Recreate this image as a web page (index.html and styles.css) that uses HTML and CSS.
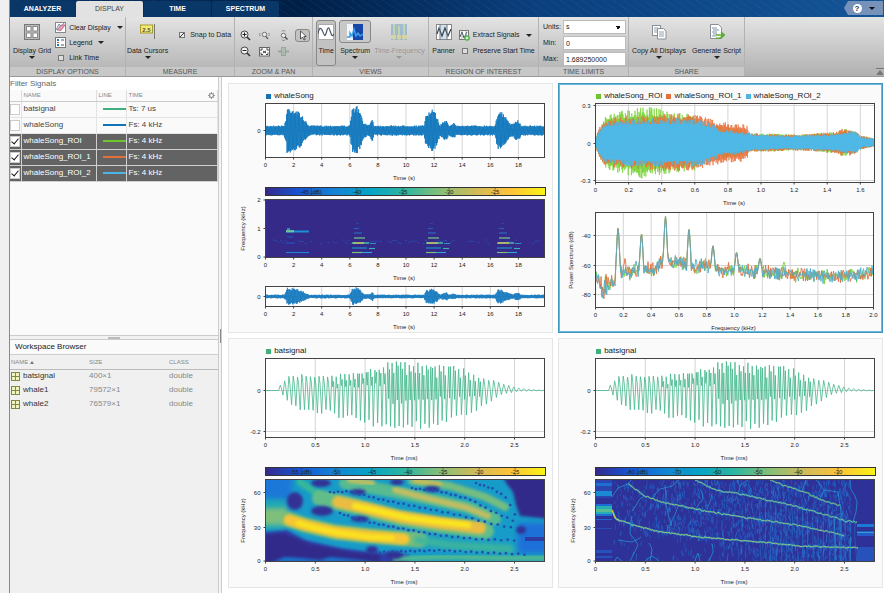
FILE: index.html
```html
<!DOCTYPE html>
<html lang="en">
<head>
<meta charset="utf-8">
<title>Signal Analyzer</title>
<link rel="stylesheet" href="styles.css">
</head>
<body>
<div class="app">
  <header class="titlebar">
    <nav class="tabs">
      <button class="tab">ANALYZER</button>
      <button class="tab tab-active">DISPLAY</button>
      <button class="tab">TIME</button>
      <button class="tab">SPECTRUM</button>
    </nav>
    <button class="help" aria-label="Help"><span class="help-mark">?</span><span class="caret"></span></button>
  </header>

  <div class="toolstrip">
    <section class="group g-display">
      <div class="tools">
        <button class="big">
          <svg class="icon" viewBox="0 0 16 16"><rect x=".5" y=".5" width="15" height="15" fill="#bbb" stroke="#777"/><g fill="#fff" stroke="#888"><rect x="2.5" y="2.5" width="4.5" height="4.5"/><rect x="9" y="2.5" width="4.5" height="4.5"/><rect x="2.5" y="9" width="4.5" height="4.5"/><rect x="9" y="9" width="4.5" height="4.5"/></g></svg>
          <span>Display Grid</span><i class="caret"></i>
        </button>
        <div class="rows">
          <button class="small"><svg class="icon-s" viewBox="0 0 11 11"><rect x=".5" y=".5" width="10" height="10" fill="#fff" stroke="#888"/><path d="M1 8 4 2 6 5 9 1" fill="none" stroke="#6a8fb5"/><path d="M2 8 6 3h4L6 8.500z" fill="#e6a1b5" stroke="#a84c6b" stroke-width=".7"/></svg>Clear Display<i class="caret"></i></button>
          <button class="small"><svg class="icon-s" viewBox="0 0 11 11"><rect x=".5" y=".5" width="10" height="10" fill="#fff" stroke="#777"/><path d="M2 3h2M2 8h2" stroke="#1d7ac0" stroke-width="2"/><path d="M2 5.5h2" stroke="#c44" stroke-width="1"/><path d="M6 3h3M6 8h3" stroke="#555"/></svg>Legend<i class="caret"></i></button>
          <label class="small check"><input type="checkbox">Link Time</label>
        </div>
      </div>
      <h2>DISPLAY OPTIONS</h2>
    </section>

    <section class="group g-measure">
      <div class="tools">
        <button class="big">
          <svg class="icon" viewBox="0 0 16 16"><path d="M14.5 0v15" stroke="#777"/><rect x=".5" y="1" width="12" height="8" fill="#f3ea72" stroke="#a59b32"/><text x="6.5" y="7.5" text-anchor="middle" class="flag">2.5</text></svg>
          <span>Data Cursors</span><i class="caret"></i>
        </button>
        <div class="rows rows-mid"><label class="small check"><input type="checkbox" checked>Snap to Data</label></div>
      </div>
      <h2>MEASURE</h2>
    </section>

    <section class="group g-zoom">
      <div class="tools zoom-grid">
        <button aria-label="Zoom in"><svg class="icon-s" viewBox="0 0 11 11"><circle cx="4.5" cy="4.5" r="3.5" fill="#f4f4f4" stroke="#444"/><path d="M7 7l3 3" stroke="#333" stroke-width="1.6"/><path d="M2.5 4.5h4M4.5 2.5v4" stroke="#222"/></svg></button>
        <button aria-label="Zoom X"><svg class="icon-s" viewBox="0 0 11 11"><circle cx="5.5" cy="4.5" r="2.2" fill="#eee" stroke="#555" stroke-width=".8"/><path d="M7 6.500l2 2.500" stroke="#444" stroke-width="1.200"/><path d="M1.500 3 0 4.500 1.500 6M9.500 3 11 4.500 9.500 6" fill="none" stroke="#666" stroke-width=".8"/></svg></button>
        <button aria-label="Zoom Y"><svg class="icon-s" viewBox="0 0 11 11"><circle cx="5.5" cy="5.5" r="2.2" fill="#eee" stroke="#555" stroke-width=".8"/><path d="M7 7l2.500 2.500" stroke="#444" stroke-width="1.200"/><path d="M4 1.500 5.500 0 7 1.500M4 9.500 5.500 11 7 9.500" fill="none" stroke="#666" stroke-width=".8"/></svg></button>
        <button aria-label="Pointer" class="pressed"><svg class="icon-s" viewBox="0 0 11 11"><path d="M3.5 1v8l2-2 1.5 3 1.2-.6L6.8 6.5h2.5z" fill="#fff" stroke="#333" stroke-width=".8"/></svg></button>
        <button aria-label="Zoom out"><svg class="icon-s" viewBox="0 0 11 11"><circle cx="4.5" cy="4.5" r="3.5" fill="#f4f4f4" stroke="#444"/><path d="M7 7l3 3" stroke="#333" stroke-width="1.6"/><path d="M2.5 4.5h4" stroke="#222"/></svg></button>
        <button aria-label="Fit to view"><svg class="icon-s" viewBox="0 0 11 11"><rect x=".5" y="1.5" width="10" height="8.5" fill="#fff" stroke="#666"/><path d="M2 5V3h2M7 3h2v2M9 6.5v2H7M4 8.5H2v-2M4 5l3 2M7 5 4 7" fill="none" stroke="#444"/></svg></button>
        <button aria-label="Restore" disabled><svg class="icon-s faded" viewBox="0 0 11 11"><rect x="3.5" y="1.5" width="4" height="8" fill="#9bb5a4" stroke="#888"/><path d="M0 5.5h3M8 5.5h3" stroke="#888" stroke-width="2"/></svg></button>
      </div>
      <h2>ZOOM &amp; PAN</h2>
    </section>

    <section class="group g-views">
      <div class="tools">
        <button class="big pressed">
          <svg class="icon" viewBox="0 0 16 16"><rect x=".5" y=".5" width="15" height="15" fill="#fff" stroke="#aaa"/><path d="M0 10C1 3 3 3 4.5 7S7 14 8.5 8 11 3 12.5 8s2 4 3.5 2" fill="none" stroke="#456" stroke-width="1.2"/></svg>
          <span>Time</span>
        </button>
        <button class="big">
          <span class="iconbox"><svg class="icon" viewBox="0 0 16 16"><rect width="16" height="16" fill="#f2f6fc"/><rect x="6" width="10" height="16" fill="#1546a8"/><path d="M0 13h3V9l2 3 2-7 2 7 2-3 2 3 3-2" fill="none" stroke="#3a9de8" stroke-width="1.5"/></svg></span>
          <span>Spectrum</span><i class="caret"></i>
        </button>
        <button class="big" disabled>
          <svg class="icon faded" viewBox="0 0 16 16"><rect width="16" height="16" fill="#7ba9cd"/><path d="M3 0v16M8 2v14M13 0v16" stroke="#aed0a0" stroke-width="2"/><path d="M0 13h16" stroke="#d8d28a" stroke-width="4"/><path d="M5.5 0v16M10.5 0v16" stroke="#8aa"/></svg>
          <span>Time-Frequency</span><i class="caret"></i>
        </button>
      </div>
      <h2>VIEWS</h2>
    </section>

    <section class="group g-roi">
      <div class="tools">
        <button class="big">
          <svg class="icon" viewBox="0 0 16 16"><rect x=".5" y=".5" width="15" height="15" fill="#fff" stroke="#888"/><rect x="4" y="1" width="7" height="14" fill="#cfe0ee"/><path d="M1 10 3 4l3 8 3-8 3 8 3-7" fill="none" stroke="#345" stroke-width="1.2"/><path d="M4 0v16M11 0v16" stroke="#777"/></svg>
          <span>Panner</span>
        </button>
        <div class="rows rows-mid">
          <button class="small"><svg class="icon-s" viewBox="0 0 11 11"><rect x=".5" y=".5" width="9" height="9" fill="#fff" stroke="#777"/><path d="M1 7 3 2l2 6 3-6" fill="none" stroke="#456"/><path d="M3 0v10M7 0v6" stroke="#888" stroke-width=".7"/><circle cx="8" cy="8" r="2.8" fill="#49a942"/><path d="M6.5 8h3M8 6.5v3" stroke="#fff"/></svg>Extract Signals<i class="caret"></i></button>
          <label class="small check"><input type="checkbox">Preserve Start Time</label>
        </div>
      </div>
      <h2>REGION OF INTEREST</h2>
    </section>

    <section class="group g-limits">
      <div class="tools fields">
        <label for="units">Units:</label><select id="units"><option>s</option></select>
        <label for="min">Min:</label><input id="min" type="text" value="0">
        <label for="max">Max:</label><input id="max" type="text" value="1.689250000">
      </div>
      <h2>TIME LIMITS</h2>
    </section>

    <section class="group g-share">
      <div class="tools">
        <button class="big">
          <svg class="icon" viewBox="0 0 16 16"><g fill="#fff" stroke="#8a8f96"><rect x="1.5" y="1.5" width="8" height="10"/><path d="M6.5 4.5h6l2.5 2.5v8H6.5z"/></g><path d="M3 4h4M3 6h3M3 8h3M8 8h5M8 10h5M8 12h5" stroke="#8fa0b0"/></svg>
          <span>Copy All Displays</span><i class="caret"></i>
        </button>
        <button class="big">
          <svg class="icon" viewBox="0 0 16 16"><path d="M1.5.5h8l3 3v11h-11z" fill="#fff" stroke="#8a8f96"/><path d="M3 4h5M4 6h6M3 8h5M4 10h4M3 12h4" stroke="#7c93a8"/><path d="M7 14c4 1 6-1 6-3M7 11h8M12 8l3.5 3-3.5 3" fill="none" stroke="#5dab35" stroke-width="1.5"/></svg>
          <span>Generate Script</span><i class="caret"></i>
        </button>
      </div>
      <h2>SHARE</h2>
    </section>
    <button class="collapse" aria-label="Minimize toolstrip"><svg viewBox="0 0 8 8"><path d="M0 1h8M4 3l3 4H1z" fill="#777" stroke="#777"/></svg></button>
  </div>

  <div class="work">
    <aside class="side">
      <div class="signals">
        <input class="filter" type="text" placeholder="Filter Signals" aria-label="Filter Signals">
        <table class="sigtable">
          <colgroup><col class="c-check"><col class="c-name"><col class="c-line"><col></colgroup>
          <thead><tr><th></th><th>NAME</th><th>LINE</th><th><span class="th-time">TIME <svg class="gear" viewBox="0 0 8 8"><circle cx="4" cy="4" r="2.2" fill="none" stroke="#888" stroke-width="1.2"/><path d="M4 0v1.5M4 6.5V8M0 4h1.5M6.5 4H8M1.2 1.2l1 1M5.8 5.8l1 1M6.8 1.2l-1 1M2.2 5.8l-1 1" stroke="#888"/></svg></span></th></tr></thead>
          <tbody>
            <tr><td><input type="checkbox" aria-label="batsignal"></td><td>batsignal</td><td><span class="swatch s-bat"></span></td><td>Ts: 7 us</td></tr>
            <tr><td><input type="checkbox" aria-label="whaleSong"></td><td>whaleSong</td><td><span class="swatch s-whale"></span></td><td>Fs: 4 kHz</td></tr>
            <tr class="sel"><td><input type="checkbox" checked aria-label="whaleSong_ROI"></td><td>whaleSong_ROI</td><td><span class="swatch s-roi"></span></td><td>Fs: 4 kHz</td></tr>
            <tr class="sel"><td><input type="checkbox" checked aria-label="whaleSong_ROI_1"></td><td>whaleSong_ROI_1</td><td><span class="swatch s-roi1"></span></td><td>Fs: 4 kHz</td></tr>
            <tr class="sel"><td><input type="checkbox" checked aria-label="whaleSong_ROI_2"></td><td>whaleSong_ROI_2</td><td><span class="swatch s-roi2"></span></td><td>Fs: 4 kHz</td></tr>
          </tbody>
        </table>
      </div>
      <div class="splitter"><span></span></div>
      <div class="workspace">
        <h3>Workspace Browser</h3>
        <table class="wstable">
          <colgroup><col class="w-name"><col class="w-size"><col></colgroup>
          <thead><tr><th>NAME <i class="sort"></i></th><th>SIZE</th><th>CLASS</th></tr></thead>
          <tbody>
            <tr><td><span class="var"><i class="matrix"></i>batsignal</span></td><td>400×1</td><td>double</td></tr>
            <tr><td><span class="var"><i class="matrix"></i>whale1</span></td><td>79572×1</td><td>double</td></tr>
            <tr><td><span class="var"><i class="matrix"></i>whale2</span></td><td>76579×1</td><td>double</td></tr>
          </tbody>
        </table>
      </div>
    </aside>
    <div class="vsplit"><span></span></div>
    <main class="displays">
      <section class="display">
        <div class="legend"><span><i class="s-whale"></i>whaleSong</span></div>
        <svg id="whale-time" viewBox="229 101 323 84"></svg>
        <svg id="whale-spec" viewBox="229 185 323 99"></svg>
        <svg id="whale-pan" viewBox="229 284 323 48"></svg>
      </section>
      <section class="display display-active">
        <div class="legend"><span><i class="s-roi"></i>whaleSong_ROI</span><span><i class="s-roi1"></i>whaleSong_ROI_1</span><span><i class="s-roi2"></i>whaleSong_ROI_2</span></div>
        <svg id="roi-time" viewBox="559 101 323 107"></svg>
        <svg id="roi-power" viewBox="559 208 323 124"></svg>
      </section>
      <section class="display">
        <div class="legend"><span><i class="s-bat"></i>batsignal</span></div>
        <svg id="bat-time" viewBox="229 356 323 108"></svg>
        <svg id="bat-spec" viewBox="229 464 323 123"></svg>
      </section>
      <section class="display">
        <div class="legend"><span><i class="s-bat"></i>batsignal</span></div>
        <svg id="bat-time-2" viewBox="229 356 323 108"></svg>
        <svg id="bat-reassigned" viewBox="229 464 323 123"></svg>
      </section>
    </main>
  </div>
</div>
<script src="charts.js"></script>
</body>
</html>
```

FILE: styles.css
```css
* { box-sizing: border-box; }
body {
  margin: 0;
  background: #f0f0f0;
  color: #222;
  font: 7px/10px "Liberation Sans", Arial, sans-serif;
}
button, input, select { font: inherit; color: inherit; }
button { margin: 0; padding: 0; border: 0; background: none; }
h2, h3 { margin: 0; font-weight: normal; }
input[type="checkbox"] {
  appearance: none;
  flex: none;
  width: 6px;
  height: 6px;
  margin: 0;
  border: 1px solid #777;
  background: #ddd;
}
.check input:checked { background: linear-gradient(135deg, #eee 40%, #333 40%, #333 60%, #eee 60%); }

.app {
  display: flex;
  flex-direction: column;
  min-height: 100vh;
  margin-left: 9px;
  border-left: 1px solid #8a8a8a;
}

/* Title bar */
.titlebar {
  display: flex;
  justify-content: space-between;
  align-items: flex-end;
  height: 17px;
  background:
    repeating-linear-gradient(35deg, transparent 0 5px, rgba(90, 160, 220, .07) 5px 6px),
    linear-gradient(90deg, #0a3566 0, #001f47 33%, #0b3f7d 60%, #135496 100%);
}
.tabs { display: flex; gap: 1px; }
.tab {
  width: 67px;
  height: 16px;
  border-radius: 2px 2px 0 0;
  background: #093767;
  color: #fff;
  font-weight: bold;
}
.tab:first-child { width: 65px; }
.tab-active { background: #e2e2e2; color: #444; font-weight: normal; }
.help {
  display: flex;
  align-items: center;
  justify-content: center;
  gap: 7px;
  width: 39px;
  height: 14px;
  margin: 0 1px 2px 0;
  background: #7792b8;
  clip-path: polygon(4px 0, 100% 0, 100% 100%, 4px 100%, 0 50%);
}
.help .caret { border-top-color: #111; }
.help-mark {
  width: 9px;
  height: 9px;
  border-radius: 50%;
  background: #fff;
  color: #235;
  font-size: 8px;
  font-weight: bold;
  line-height: 9px;
}

/* Toolstrip */
.toolstrip {
  display: flex;
  height: 60px;
  background: linear-gradient(#e4e4e4, #cfcfcf 40%, #b0b0b0);
  border-bottom: 1px solid #999;
}
.group {
  display: flex;
  flex-direction: column;
  flex: none;
  border-right: 1px solid #b2b2b2;
}
.group h2 {
  height: 9px;
  background: #c8c8c8;
  color: #555;
  font-size: 7px;
  line-height: 9px;
  text-align: center;
}
.g-display { width: 116px; }
.g-measure { width: 109px; }
.g-zoom { width: 78px; }
.g-views { width: 116px; }
.g-roi { width: 110px; }
.g-limits { width: 90px; }
.g-share { width: 116px; }
.tools {
  display: flex;
  flex: 1;
  justify-content: center;
  gap: 6px;
  padding: 3px 2px 1px;
  white-space: nowrap;
}
.g-display .tools { gap: 4px; justify-content: flex-start; padding-left: 3px; }
.g-measure .tools { gap: 8px; padding-right: 4px; }
.g-views .tools { gap: 3px; }
.g-roi .tools { gap: 4px; }
.big {
  display: flex;
  flex-direction: column;
  align-items: center;
  padding-top: 4px;
}
.big > span:not(.iconbox) { margin-top: 6px; }
.big:disabled { color: #999; }
.big:disabled .caret { border-top-color: #999; }
.icon { display: block; width: 16px; height: 16px; }
.icon-s { display: block; flex: none; width: 11px; height: 11px; }
.faded { opacity: .6; }
.flag { font: bold 6px "Liberation Sans", sans-serif; fill: #554; }
.iconbox {
  margin: -4px 0 -3px;
  padding: 3px 7px 2px;
  border: 1px solid #888;
  border-radius: 3px;
  background: #c9c9c9;
}
.pressed { border: 1px solid #888; border-radius: 3px; background: #c2c2c2; }
.big.pressed { padding: 3px 1px 0; }
.caret {
  display: inline-block;
  width: 0;
  height: 0;
  border: 3px solid transparent;
  border-top: 3px solid #222;
  border-bottom: 0;
}
.rows { display: grid; grid-auto-rows: 15px; }
.rows-mid { grid-auto-rows: 16px; align-content: center; }
.g-measure .rows-mid { padding-bottom: 16px; }
.small { display: flex; align-items: center; gap: 3px; }
.small .caret { margin-left: 3px; }
.check input { margin: 0 2px 0 3px; }
.zoom-grid {
  display: grid;
  grid-template-columns: repeat(4, 16px);
  grid-auto-rows: 14px;
  gap: 2px 3px;
  align-content: center;
  place-items: center;
}
.zoom-grid .pressed { padding: 0 1px; }
.fields {
  display: grid;
  grid-template-columns: 18px 1fr;
  gap: 2px;
  align-items: center;
  padding: 3px 2px 1px 4px;
}
.fields input, .fields select {
  appearance: none;
  width: 100%;
  height: 14px;
  padding: 0 2px;
  border: 1px solid #bbb;
  border-radius: 0;
  background: #fff;
}
.fields select {
  background:
    linear-gradient(to bottom left, transparent 50%, #111 50%) right 4px center / 3px 3px no-repeat,
    linear-gradient(to bottom right, transparent 50%, #111 50%) right 7px center / 3px 3px no-repeat, #fff;
  background:
    linear-gradient(135deg, #111 50%, transparent 50%) right 4px center / 3px 3px no-repeat,
    linear-gradient(225deg, #111 50%, transparent 50%) right 7px center / 3px 3px no-repeat, #fff;
}
.collapse { align-self: flex-end; margin-left: auto; }
.collapse svg { display: block; width: 8px; height: 9px; }

/* Work area */
.work { display: flex; flex: 1; background: #fff; }
.side { display: flex; flex-direction: column; flex: none; width: 208px; }
.signals { height: 258px; background: #fafafa; }
.filter {
  display: block;
  width: 100%;
  height: 13px;
  padding: 0;
  border: 0;
  background: #fff;
  font-size: 8px;
}
.filter::placeholder { color: #666; opacity: 1; }
table { width: 100%; border-collapse: collapse; table-layout: fixed; }
th { padding: 0 2px; color: #888; font-size: 6px; font-weight: normal; text-align: left; }
td { padding: 0 2px; font-size: 8px; }
.c-check { width: 11px; }
.c-name { width: 75px; }
.c-line { width: 30px; }
.sigtable th { height: 11px; border-right: 1px solid #ddd; border-bottom: 1px solid #ccc; }
.sigtable td { height: 16px; border: 1px solid #e4e4e4; border-left: 0; color: #444; }
.sigtable td:first-child { padding: 0; }
.sigtable td:nth-child(3) { padding: 0 0 0 6px; }
.sigtable input { display: block; width: 10px; height: 11px; border: 1px solid #ccc; background: #fff; }
.sigtable input:checked::after {
  content: "";
  display: block;
  width: 3px;
  height: 6px;
  margin: 0 auto;
  border: solid #111;
  border-width: 0 1px 1px 0;
  transform: rotate(40deg);
}
.sigtable .sel td { background: #636363; border-color: #d0d0d0; color: #fff; }
.th-time { display: flex; justify-content: space-between; align-items: center; }
.gear { width: 7px; height: 7px; }
.swatch { display: block; height: 2px; }
.s-bat { background: #3fae7f; }
.s-whale { background: #1273b8; }
.s-roi { background: #6fc52c; }
.s-roi1 { background: #e2703a; }
.s-roi2 { background: #4db5e6; }
.splitter {
  display: flex;
  justify-content: center;
  align-items: center;
  height: 5px;
  border: solid #ccc;
  border-width: 1px 0;
  background: #f2f2f2;
}
.splitter span { width: 12px; height: 2px; background: #bbb; }
.workspace { flex: 1; background: #f0f0f0; }
.workspace h3 {
  height: 15px;
  padding-left: 5px;
  border-bottom: 1px solid #ccc;
  background: #fafafa;
  color: #222;
  font-size: 8px;
  line-height: 14px;
}
.w-name { width: 77px; }
.w-size { width: 80px; }
.wstable th { height: 14px; border-bottom: 1px solid #bbb; }
.wstable td { height: 14px; color: #888; }
.wstable th:first-child, .wstable td:first-child { padding-left: 1px; }
.var { display: flex; align-items: center; gap: 3px; color: #333; }
.matrix {
  width: 9px;
  height: 9px;
  border: 1px solid #7b8b45;
  background: linear-gradient(#7b8b45, #7b8b45) center / 1px 100% no-repeat,
    linear-gradient(#7b8b45, #7b8b45) center / 100% 1px no-repeat, #f1f2c0;
}
.sort {
  display: inline-block;
  border: 2px solid transparent;
  border-top: 0;
  border-bottom: 3px solid #777;
}
.vsplit {
  display: flex;
  flex: none;
  width: 4px;
  border: solid #ccc;
  border-width: 0 1px;
  background: #f4f4f4;
}
.vsplit span { width: 1px; height: 14px; margin: 252px 0 0 1px; background: #888; }

/* Displays */
.displays {
  display: grid;
  flex: 1;
  grid-template-columns: 1fr 1fr;
  align-content: start;
  gap: 5px;
  min-width: 0;
  padding: 6px 1px 5px 6px;
  background: #fff;
}
.display { border: 1px solid #e6e6e6; background: #fafafa; }
.display-active { border-color: #3d97bf; box-shadow: inset 0 0 0 1px #6db8d8; }
.legend {
  display: flex;
  gap: 4px;
  height: 17px;
  padding: 2px 0 0 11.5%;
  font-size: 8px;
}
.legend span { display: flex; align-items: center; gap: 3px; height: 20px; }
.legend i { width: 5px; height: 5px; }
.display > svg { display: block; width: 100%; }
.display text { fill: #222; font: 6px "Liberation Sans", Arial, sans-serif; }
```

FILE: charts.js
```js
const NS = 'http://www.w3.org/2000/svg';
let seed = 7;
const rnd = () => (seed = (seed * 16807) % 2147483647) / 2147483647;

function add(parent, tag, attrs, text) {
  const el = document.createElementNS(NS, tag);
  for (const k in attrs) el.setAttribute(k, attrs[k]);
  if (text !== undefined) el.textContent = text;
  parent.appendChild(el);
  return el;
}

// Linear interpolation through a list of [x, y] points.
function lerp(pts, x) {
  if (x <= pts[0][0]) return pts[0][1];
  for (let i = 1; i < pts.length; i++) {
    const [x0, y0] = pts[i - 1], [x1, y1] = pts[i];
    if (x <= x1) return y0 + (y1 - y0) * (x - x0) / (x1 - x0);
  }
  return pts[pts.length - 1][1];
}
const toPath = pts => 'M' + pts.map(p => p[0].toFixed(1) + ' ' + p[1].toFixed(1)).join('L');
const stroke = (g, pts, color, width, extra) =>
  add(g, 'path', { d: toPath(pts), fill: 'none', stroke: color, 'stroke-width': width, 'stroke-linejoin': 'round', ...extra });

// Draws background, grid, data, frame and axis texts.
function plot(id, o, draw) {
  const svg = document.getElementById(id);
  const [l, t, r, b] = o.box;
  add(svg, 'rect', { x: l, y: t, width: r - l, height: b - t, fill: o.fill || '#fff' });
  if (!o.fill) {
    o.xt.forEach(([x]) => add(svg, 'path', { d: `M${x} ${t}V${b}`, stroke: '#d4d4d4', 'stroke-width': 1 }));
    o.yt.forEach(([y]) => add(svg, 'path', { d: `M${l} ${y}H${r}`, stroke: '#d4d4d4', 'stroke-width': 1 }));
  }
  const clip = add(svg, 'clipPath', { id: id + '-clip' });
  add(clip, 'rect', { x: l, y: t, width: r - l, height: b - t });
  draw(add(svg, 'g', { 'clip-path': `url(#${id}-clip)` }), l, t, r, b);
  add(svg, 'rect', { x: l, y: t, width: r - l, height: b - t, fill: 'none', stroke: '#444' });
  o.xt.forEach(([x, s]) => {
    add(svg, 'path', { d: `M${x} ${b}v2`, stroke: '#444' });
    add(svg, 'text', { x, y: b + 9, 'text-anchor': 'middle' }, s);
  });
  o.yt.forEach(([y, s]) => {
    add(svg, 'path', { d: `M${l - 2} ${y}h2`, stroke: '#444' });
    add(svg, 'text', { x: l - 5, y: y + 2, 'text-anchor': 'end' }, s);
  });
  add(svg, 'text', { x: (l + r) / 2 - 1, y: b + 22, 'text-anchor': 'middle' }, o.xlabel);
  if (o.ylabel) {
    const x = l - (o.ylOff || 21), y = (t + b) / 2;
    add(svg, 'text', { x, y, 'text-anchor': 'middle', transform: `rotate(-90 ${x} ${y})` }, o.ylabel);
  }
}

function colorbar(id, y, labels) {
  const svg = document.getElementById(id);
  const grad = add(svg, 'linearGradient', { id: id + '-map' });
  ['#35298a', '#1556d8', '#1484d4', '#06a4c6', '#2eb7a0', '#87bf77', '#d1bb59', '#fec338', '#f9f414']
    .forEach((c, i) => add(grad, 'stop', { offset: i / 8, 'stop-color': c }));
  add(svg, 'rect', { x: 265.5, y, width: 280, height: 8, fill: `url(#${id}-map)`, stroke: '#333' });
  labels.forEach(([x, s]) => {
    add(svg, 'path', { d: `M${x} ${y}v2M${x} ${y + 6}v2`, stroke: '#333', 'stroke-width': 0.7 });
    add(svg, 'text', { x, y: y + 6, 'text-anchor': 'middle' }, s);
  });
}

/* Whale song */
const whaleX = Array.from({ length: 10 }, (_, i) => [265.5 + i * 28.1, String(i * 2)]);
const whaleEnv = [[265, 5], [284, 5], [286, 12], [287, 23], [291, 23], [297, 20], [303, 14], [307, 7], [310, 5],
  [350, 5], [352, 21], [356, 26], [359, 21], [362, 13], [364, 7], [367, 6], [370, 7], [372.5, 13], [374, 5],
  [424, 5], [426, 18], [429, 18], [432, 21], [435, 18], [438, 12], [440, 5], [443, 9], [447, 11], [449, 5], [453, 8], [457, 5],
  [495, 5], [498, 20], [502, 18], [506, 13], [510, 8], [513, 6], [516, 10], [519, 10], [521, 5], [545, 5]];
function burst(g, env, cy, scale, color, from, to, jitter, width) {
  const pts = [];
  let side = 1;
  for (let x = from; x <= to; x += 0.4) {
    pts.push([x, cy - side * lerp(env, x) * scale * (1 - jitter * rnd())]);
    side = -side;
  }
  stroke(g, pts, color, width || 0.7);
}
plot('whale-time', { box: [265.5, 103.5, 544.5, 157.5], xt: whaleX, yt: [[130.5, '0']], xlabel: 'Time (s)' },
  g => burst(g, whaleEnv, 130.5, 1.02, '#0f76bd', 265, 545, 0.28, 0.8));
colorbar('whale-spec', 187.5, [[311, '-45 (dB)'], [357, '-40'], [403, '-35'], [449, '-30'], [495, '-25']]);
plot('whale-spec', { box: [265.5, 199.5, 544.5, 257.5], fill: '#352a87', xt: whaleX, yt: [[200, '2'], [228.5, '1'], [257, '0']], xlabel: 'Time (s)', ylabel: 'Frequency (kHz)' }, g => {
  const dash = (x, y, w, c, h = 0.9) => add(g, 'rect', { x, y: y - h / 2, width: w, height: h, fill: c });
  for (let x = 270; x < 540; x += 2.5) if (rnd() < 0.65) dash(x, 242 + (rnd() - 0.5) * 4, 2, '#245fce', 0.6);
  dash(286, 231.5, 23, '#1a91d2', 2); dash(286, 231.2, 8, '#6cc5a0', 2.2);
  dash(287, 229, 3, '#3ca7d2', 1.5); dash(287, 237, 6, '#255ccd'); dash(286, 243, 9, '#245fce'); dash(286, 252.5, 23, '#2082d4', 1.1);
  [352, 426, 497].forEach(x => {
    dash(x, 252.5, 20, '#2ea6ce', 1.1); dash(x, 252.5, 10, '#83be79', 1.1);
    dash(x, 248, 15, '#1b98d1', 1.1); dash(x + 17, 248.5, 6, '#3ab2b2', 1.1);
    dash(x, 243, 17, '#48bba0', 1.5); dash(x + 1, 243, 11, '#e5ca58', 1.2);
    dash(x + 18, 243.5, 6, '#2b9fcf');
    dash(x + 2, 238, 11, '#72bd88', 1.3);
    dash(x + 2, 233, 8, '#287fcf'); dash(x + 2, 228.5, 5, '#2467c8'); dash(x + 4, 223.5, 3, '#2951ba', 0.7);
  });
});
plot('whale-pan', { box: [265.5, 286.5, 544.5, 306.5], xt: whaleX, yt: [[296.5, '0']], xlabel: 'Time (s)' },
  g => burst(g, whaleEnv, 296.5, 0.38, '#0f76bd', 265, 545, 0.3, 0.7));

/* Regions of interest */
plot('roi-time', {
  box: [595.5, 103.5, 874.5, 182.5], xt: Array.from({ length: 9 }, (_, i) => [595.5 + i * 33.1, i ? (i / 5).toFixed(1) : '0']),
  yt: [[105.5, '0.3'], [143.5, '0'], [180.5, '-0.3']], xlabel: 'Time (s)'
}, g => {
  const tail = [[750, 9], [770, 9], [800, 8], [838, 11], [842, 14], [850, 13], [856, 11], [860, 7], [866, 6], [874, 4]];
  burst(g, [[595, 3], [600, 16], [606, 28], [620, 32], [642, 36], [655, 35], [675, 30], [695, 28], [702, 20], [740, 14], ...tail], 142.5, 1, '#78d235', 595, 874, 0.3);
  burst(g, [[595, 4], [600, 17], [606, 25], [640, 27], [675, 29], [695, 28], [710, 24], [728, 20], [746, 19], ...tail], 142.5, 1, '#e8743f', 595, 874, 0.3);
  const inner = [[595, 3], [600, 14], [606, 20], [620, 22], [640, 23], [690, 23], [705, 21], [715, 17], [720, 13], [740, 11], [755, 8], [790, 7], [830, 8], [852, 11], [857, 10], [863, 5], [874, 4]];
  add(g, 'path', { d: toPath([...inner.map(([x, a]) => [x, 142.5 - a * 0.8]), ...inner.slice().reverse().map(([x, a]) => [x, 142.5 + a * 0.8])]) + 'Z', fill: '#50b9e7' });
  burst(g, inner, 142.5, 1.05, '#50b9e7', 595, 874, 0.35);
});
plot('roi-power', {
  box: [595.5, 212.5, 873.5, 307.5], xt: Array.from({ length: 11 }, (_, i) => [595.5 + i * 27.8, i ? (i / 5).toFixed(1) : '0']),
  yt: [[235.5, '-40'], [265.5, '-60'], [294.5, '-80']], xlabel: 'Frequency (kHz)', ylabel: 'Power Spectrum (dB)', ylOff: 23
}, g => {
  const floor = [[595, 282], [598, 274], [600, 288], [606, 286], [615, 282], [619, 270], [632, 273], [640, 270], [655, 269], [662, 263], [680, 262], [690, 268], [705, 265], [715, 270], [740, 271], [790, 274], [830, 276], [855, 275], [874, 271]];
  const peaks = [[618, 228], [641.5, 234], [665.5, 216], [689, 229.5], [713, 245.5], [736.5, 252.5], [760, 258], [784, 262], [625, 258], [636, 260]];
  ['#78cf39', '#e2703f', '#54b0cc'].forEach((c, k) => {
    const pts = [];
    for (let x = 595.5; x <= 874; x += 0.7) {
      let y = lerp(floor, x) + (rnd() + rnd() - 1) * (x < 612 ? 14 : 8.5);
      peaks.forEach(([px, py], i) => {
        const d = Math.abs(x - px), reach = i > 7 ? 1 : 2.2;
        const shown = i < 7 || (i === 7 && k === 0) || (i === 8 && k === 1) || (i === 9 && k === 2);
        if (shown && d < reach) y = Math.min(y, py + k * 0.5 + Math.max(0, d - 0.4) * (lerp(floor, px) - py) / reach);
      });
      pts.push([x, y]);
    }
    stroke(g, pts, c, 0.9);
  });
});

/* Bat signal */
const batX = ['0', '0.5', '1.0', '1.5', '2.0', '2.5'].map((s, i) => [265.5 + i * 49.8, s]);
const up = [[276, 0], [280, 5], [286, 12], [292, 15], [305, 16], [330, 14], [345, 17], [365, 20], [378, 24], [392, 28], [420, 28], [448, 27], [462, 22], [480, 14], [490, 11], [502, 7], [515, 3], [530, 1], [545, 0]];
const down = [[276, 0], [280, 5], [286, 14], [292, 18], [305, 23], [325, 24], [345, 30], [365, 35], [376, 41], [390, 43], [405, 40], [425, 38], [445, 34], [460, 29], [475, 23], [485, 14], [495, 6], [505, 3], [515, 1], [545, 0]];
['bat-time', 'bat-time-2'].forEach(id => {
  seed = 42;
  plot(id, { box: [265.5, 358.5, 544.5, 437.5], xt: batX, yt: [[390.5, '0'], [431.5, '-0.2']], xlabel: 'Time (ms)' }, g => {
    const pts = [[265, 390.5], [274, 390.5]];
    for (let x = 276; x < 545; x += x < 440 ? 4.3 : 5) {
      const u = lerp(up, x), d = lerp(down, x);
      pts.push([x, 390.5 - u * (0.85 + rnd() * 0.2)]);
      if (x > 330 && x < 480) {
        const m = x > 385 ? -0.2 - rnd() * 0.3 : 0.15 + rnd() * 0.2;
        pts.push([x + 0.9, 390.5 - u * m], [x + 1.7, 390.5 - u * (0.4 + rnd() * 0.5)]);
      } else pts.push([x + 1, 390.5 - u * 0.5]);
      pts.push([x + 2.7, 390.5 + d * (0.78 + rnd() * 0.22)]);
    }
    pts.push([545, 390]);
    stroke(g, pts, '#44b78b', 0.8);
  });
});

const specAxes = { box: [265.5, 479.5, 544.5, 561.5], xt: batX, yt: [[492.5, '60'], [527.5, '30'], [561, '0']], xlabel: 'Time (ms)', ylabel: 'Frequency (kHz)' };
colorbar('bat-spec', 467.5, [[301, '-55 (dB)'], [336, '-50'], [372, '-45'], [408, '-40'], [443, '-35'], [479, '-30'], [515, '-25']]);
plot('bat-spec', { ...specAxes, fill: '#179bc8' }, g => {
  const svg = g.ownerSVGElement;
  [0.5, 1.4, 2.6].forEach((s, i) => {
    const f = add(svg, 'filter', { id: 'soft' + (i + 1), x: '-30%', y: '-60%', width: '160%', height: '220%' });
    add(f, 'feGaussianBlur', { stdDeviation: s });
  });
  const soft = n => ({ filter: `url(#soft${n})` });
  const ridge = (pts, c, w, n) => stroke(g, pts, c, w, { 'stroke-linecap': 'round', ...soft(n) });
  const area = (d, c, n) => add(g, 'path', { d, fill: c, ...soft(n) });
  // Lead-in band and quiet areas.
  area('M255 470H292V508H255z', '#1c78d8', 3);
  area('M255 499H287V529H255z', '#1aa7b8', 3);
  area('M255 508H287V525H255z', '#7fbf7b', 3);
  area('M255 533L287 530 305 540 340 548 370 552 410 555 405 564H255z', '#2d3ca8', 2);
  area('M255 536L284 533 310 544 350 552 380 555V570H255z', '#33298a', 2);
  area('M500 470 506 483 513 492 516 505 520 516 550 519V470z', '#33298a', 2);
  area('M518 523H550V553H518z', '#1b70d8', 3);
  area('M525 537H550V541H525z', '#2e3ba0', 1);
  area('M272 562 285 557 300 558 320 560 330 557 350 559 380 562z', '#1875ce', 2);
  // Broad lighter slopes, then the main ridges.
  ridge([[300, 482], [318, 494], [345, 505], [375, 510]], '#35b79a', 7, 2);
  ridge([[320, 498], [350, 505], [400, 518], [440, 525], [486, 531]], '#63bd88', 16, 2);
  ridge([[338, 502], [365, 508], [400, 517], [440, 523], [480, 528]], '#eabd43', 12, 2);
  ridge([[355, 506], [378, 511], [408, 518], [440, 522], [468, 525]], '#fae51d', 6, 2);
  ridge([[288, 519], [305, 525], [335, 532], [370, 536], [420, 540]], '#7abd78', 15, 2);
  ridge([[289, 520], [305, 525], [335, 532], [370, 536], [404, 539]], '#f5c534', 11, 2);
  ridge([[298, 523], [315, 528], [340, 533], [370, 537], [392, 538]], '#fbe31b', 5, 2);
  ridge([[418, 540], [450, 545], [510, 549]], '#3eb59c', 8, 3);
  ridge([[345, 483], [390, 491], [430, 499], [470, 508], [495, 519]], '#56bb90', 12, 2);
  ridge([[395, 490], [430, 499], [465, 507], [488, 516]], '#c3bd62', 6, 2);
  ridge([[350, 480], [372, 483]], '#b8bd66', 6, 2);
  ridge([[412, 481], [450, 486], [485, 497], [505, 507]], '#74bd80', 8, 2);
  ridge([[415, 481], [440, 484]], '#d3bb54', 4, 2);
  ridge([[395, 559], [440, 557], [500, 558], [545, 558]], '#4fb991', 5, 2);
  // Nulls.
  [[295, 501, 8, 9], [322, 511, 11, 5], [321, 483, 10, 4], [358, 492, 8, 3], [397, 482, 7, 3], [521, 530, 5, 4], [360, 519, 9, 3], [394, 555, 9, 4], [432, 489, 8, 3], [372, 550, 6, 4]]
    .forEach(([cx, cy, rx, ry]) => add(g, 'ellipse', { cx, cy, rx, ry, fill: '#323095', ...soft(2) }));
  [[[340, 513], [365, 521], [400, 528], [440, 535], [480, 539], [520, 540]],
   [[330, 492], [350, 491], [380, 499], [420, 507], [460, 515], [490, 523], [515, 528]],
   [[412, 488], [440, 491], [470, 499], [490, 510], [515, 521]],
   [[376, 552], [405, 551], [440, 550], [480, 552], [525, 554]],
   [[476, 483], [492, 488], [506, 497], [515, 514]]].forEach(row => {
    for (let x = row[0][0], i = 0; x < row[row.length - 1][0]; x += 4 + i * 0.08, i++)
      add(g, 'circle', { cx: x, cy: lerp(row, x) + (i % 2) * 0.7, r: 1.35, fill: '#2350ae', ...soft(1) });
  });
});

seed = 99;
colorbar('bat-reassigned', 467.5, [[307, '-80 (dB)'], [347, '-70'], [387, '-60'], [428, '-50'], [468, '-40'], [508, '-30']]);
plot('bat-reassigned', { ...specAxes, fill: '#2d3198' }, g => {
  // Fine vertical streaks between the harmonics.
  for (let i = 0; i < 2000; i++) {
    const x = 283 + 238 * Math.pow(rnd(), 0.72), y = 479 + rnd() * 81, low = lerp([[283, 524], [330, 532], [390, 545], [450, 560], [530, 562]], x);
    if (y > low && rnd() < 0.8) continue;
    stroke(g, [[x, y], [x + (rnd() - 0.5) * 2.5, y + 2 + rnd() * 4]], rnd() < 0.3 ? '#2784d4' : '#2165cd', 0.7, { opacity: 0.75 });
  }
  const band = (y, h, c, x = 265, w = 17) => add(g, 'rect', { x, y, width: w, height: h, fill: c });
  band(480, 18, '#2c44b0'); band(483, 3, '#1d70d3'); band(491, 5, '#1a8bd2');
  band(504, 12, '#1d70d3'); band(506, 8, '#27adb6'); band(509, 3, '#57bd93');
  band(519, 1, '#2165cd'); band(528, 1, '#294eb5'); band(550, 3, '#2752bc'); band(556, 2, '#2752bc');
  band(524, 3, '#1c79d4', 527, 18); band(531, 5, '#2359c8', 527, 18); band(532, 1, '#31a4ca', 527, 18); band(547, 14, '#2752bc', 527, 18);
  const wobble = (pts, c, w, amp) => {
    const out = [];
    for (let x = pts[0][0]; x <= pts[pts.length - 1][0]; x += 1.5) out.push([x, lerp(pts, x) + (rnd() - 0.5) * amp]);
    stroke(g, out, '#1f9fca', w + 1.1, { opacity: 0.55 });
    stroke(g, out, c, w);
  };
  wobble([[282, 510], [286, 519], [300, 524], [325, 531], [370, 537], [430, 542], [470, 546], [528, 548]], '#9fc877', 1, 1.3);
  wobble([[298, 484], [315, 496], [335, 503], [365, 509], [410, 517], [460, 524], [500, 532], [514, 536]], '#9fc877', 0.9, 1.6);
  wobble([[365, 480], [385, 490], [410, 494], [460, 505], [500, 516], [515, 521], [527, 522]], '#8fc684', 0.9, 1.6);
  wobble([[440, 480], [455, 486], [472, 491], [490, 499], [511, 506]], '#93c277', 0.9, 1.6);
  wobble([[282, 510], [285, 518], [290, 521]], '#f3c646', 1, 0.4);
  // Branching contours linking the harmonics.
  [[[282, 497], [288, 488], [298, 484], [302, 479]], [[302, 511], [309, 500], [315, 496]], [[324, 497], [330, 489], [342, 486], [348, 480]],
   [[336, 503], [335, 485]], [[348, 506], [344, 517], [341, 526], [339, 518], [336, 504]], [[366, 509], [373, 499], [370, 489]],
   [[378, 488], [377, 479]], [[407, 494], [410, 486], [407, 479]], [[410, 486], [418, 480]], [[472, 491], [476, 480]],
   [[490, 499], [494, 490], [489, 483], [485, 479]], [[494, 490], [508, 492], [511, 510]], [[520, 479], [520, 488], [527, 502], [523, 522]],
   [[511, 506], [511, 561]], [[521, 537], [520, 561]], [[504, 516], [506, 560]], [[285, 561], [287, 557], [292, 561]],
   [[300, 561], [308, 545], [300, 534], [302, 516]], [[320, 561], [322, 550], [319, 543]], [[315, 561], [322, 556], [329, 561]], [[365, 561], [368, 553], [370, 561]],
   [[378, 561], [383, 552], [382, 544]], [[288, 540], [302, 542], [311, 537]], [[377, 509], [382, 494]], [[337, 531], [337, 525]], [[368, 541], [369, 533]]].forEach(line => {
    const out = line.flatMap((p, i) => i ? [[(p[0] + line[i - 1][0]) / 2 + (rnd() - 0.5) * 2, (p[1] + line[i - 1][1]) / 2], p] : [p]);
    stroke(g, out, '#2697d0', 0.9, { opacity: 0.85 });
  });
  for (let x = 430; x < 528; x += 5.3) {
    const y = lerp([[430, 500], [528, 522]], x);
    stroke(g, [[x, y], [x + rnd() * 2 - 1, y + 12], [x, 545], [x + rnd() * 2, 561]], '#238dd1', 0.7, { opacity: 0.6 });
  }
});
```
